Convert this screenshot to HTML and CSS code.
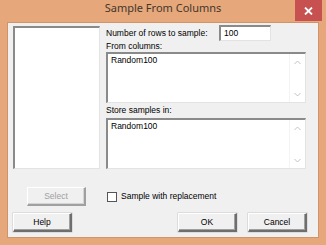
FILE: index.html
```html
<!DOCTYPE html>
<html>
<head>
<meta charset="utf-8">
<link rel="stylesheet" href="styles.css">
</head>
<body>
<div class="window">
  <div class="titlebar">
    <span class="title">Sample From Columns</span>
    <div class="close">
      <svg width="9" height="8" viewBox="0 0 9 8"><path d="M1 0.5 L8 7.5 M8 0.5 L1 7.5" stroke="#fff" stroke-width="1.8"/></svg>
    </div>
  </div>
  <div class="client">
    <div class="main">
      <div class="listbox"></div>
      <div class="right">
        <div class="row-num">
          <span class="label">Number of rows to sample:</span>
          <div class="textbox">100</div>
        </div>
        <div class="label lbl-from">From columns:</div>
        <div class="textarea">
          <span class="content">Random100</span>
          <div class="scroll">
            <svg width="7" height="5" viewBox="0 0 7 5"><path d="M0.5 4 L3.5 1 L6.5 4" fill="none" stroke="#c4c4c4" stroke-width="1"/></svg>
            <svg width="7" height="5" viewBox="0 0 7 5"><path d="M0.5 1 L3.5 4 L6.5 1" fill="none" stroke="#c4c4c4" stroke-width="1"/></svg>
          </div>
        </div>
        <div class="label lbl-store">Store samples in:</div>
        <div class="textarea">
          <span class="content">Random100</span>
          <div class="scroll">
            <svg width="7" height="5" viewBox="0 0 7 5"><path d="M0.5 4 L3.5 1 L6.5 4" fill="none" stroke="#c4c4c4" stroke-width="1"/></svg>
            <svg width="7" height="5" viewBox="0 0 7 5"><path d="M0.5 1 L3.5 4 L6.5 1" fill="none" stroke="#c4c4c4" stroke-width="1"/></svg>
          </div>
        </div>
      </div>
    </div>
    <div class="row-select">
      <div class="button disabled btn-select">Select</div>
      <div class="check-row">
        <div class="checkbox"></div>
        <span class="label">Sample with replacement</span>
      </div>
    </div>
    <div class="row-buttons">
      <div class="button">Help</div>
      <div class="spacer"></div>
      <div class="button">OK</div>
      <div class="button">Cancel</div>
    </div>
  </div>
</div>
</body>
</html>
```

FILE: styles.css
```css
* { box-sizing: border-box; }
html, body { margin: 0; padding: 0; }
body {
  background: #e6a87b;
  font-family: "Liberation Sans", Arial, sans-serif;
  font-size: 8.5px;
  color: #000;
}
.window {
  width: 326px;
  height: 245px;
  display: flex;
  flex-direction: column;
  padding: 0 7px 7px 7px;
}
.titlebar {
  height: 22px;
  display: flex;
  justify-content: center;
  align-items: flex-start;
  position: relative;
}
.title {
  font-family: "Noto Sans", sans-serif;
  font-size: 11px;
  color: #45362b;
  line-height: 16px;
}
.close {
  position: absolute;
  right: -3px;
  top: 0;
  width: 27px;
  height: 21px;
  background: #c75050;
  display: flex;
  align-items: center;
  justify-content: center;
}
.client {
  flex: 1;
  background: #f0f0f0;
  border: 1px solid #cf9468;
  padding: 2px 0 0 5px;
}
.main {
  display: flex;
  align-items: flex-start;
}
.listbox {
  width: 87px;
  height: 143px;
  margin-top: 1px;
  background: #fff;
  border-top: 2px solid #8a8a8a;
  border-left: 2px solid #8a8a8a;
  border-right: 1px solid #e3e3e3;
  border-bottom: 1px solid #e3e3e3;
}
.right {
  margin-left: 6px;
  width: 200px;
  display: flex;
  flex-direction: column;
}
.row-num {
  display: flex;
  align-items: center;
  height: 16px;
}
.row-num .label { width: 113px; }
.textbox {
  width: 52px;
  height: 16px;
  background: #fff;
  border-top: 2px solid #8a8a8a;
  border-left: 2px solid #8a8a8a;
  border-right: 1px solid #e3e3e3;
  border-bottom: 1px solid #e3e3e3;
  padding-left: 3px;
  line-height: 12px;
}
.label { line-height: 11px; white-space: nowrap; }
.lbl-from { height: 11px; }
.lbl-store { height: 15px; line-height: 15px; }
.textarea {
  height: 51px;
  background: #fff;
  border-top: 2px solid #8a8a8a;
  border-left: 2px solid #8a8a8a;
  border-right: 1px solid #e3e3e3;
  border-bottom: 1px solid #e3e3e3;
  display: flex;
  justify-content: space-between;
}
.content {
  padding: 1px 0 0 3px;
  line-height: 11px;
}
.scroll {
  width: 16px;
  border-left: 1px solid #f4f4f4;
  display: flex;
  flex-direction: column;
  justify-content: space-between;
  align-items: center;
  padding: 6px 0 5px 0;
}
.scroll svg { display: block; }
.row-select {
  display: flex;
  align-items: center;
  margin-top: 18px;
  height: 19px;
}
.btn-select { margin-left: 14px; }
.check-row {
  display: flex;
  align-items: center;
  margin-left: 21px;
}
.checkbox {
  width: 10px;
  height: 10px;
  background: #fff;
  border: 1px solid #555;
  margin-right: 4px;
}
.row-buttons {
  display: flex;
  margin-top: 7px;
  height: 19px;
  padding-right: 11px;
}
.spacer { flex: 1; }
.button {
  width: 59px;
  height: 19px;
  display: flex;
  align-items: center;
  justify-content: center;
  background: #f0f0f0;
  border-top: 1px solid #fff;
  border-left: 1px solid #fff;
  border-right: 2px solid #6e6e6e;
  border-bottom: 2px solid #6e6e6e;
  box-shadow: inset -1px -1px 0 #a0a0a0, 0 0 0 0.5px #c8c8c8;
}
.row-buttons .button + .button { margin-left: 11px; }
.button.disabled {
  color: #a0a0a0;
  border-right-color: #a0a0a0;
  border-bottom-color: #a0a0a0;
  box-shadow: inset -1px -1px 0 #d4d4d4;
}
```
